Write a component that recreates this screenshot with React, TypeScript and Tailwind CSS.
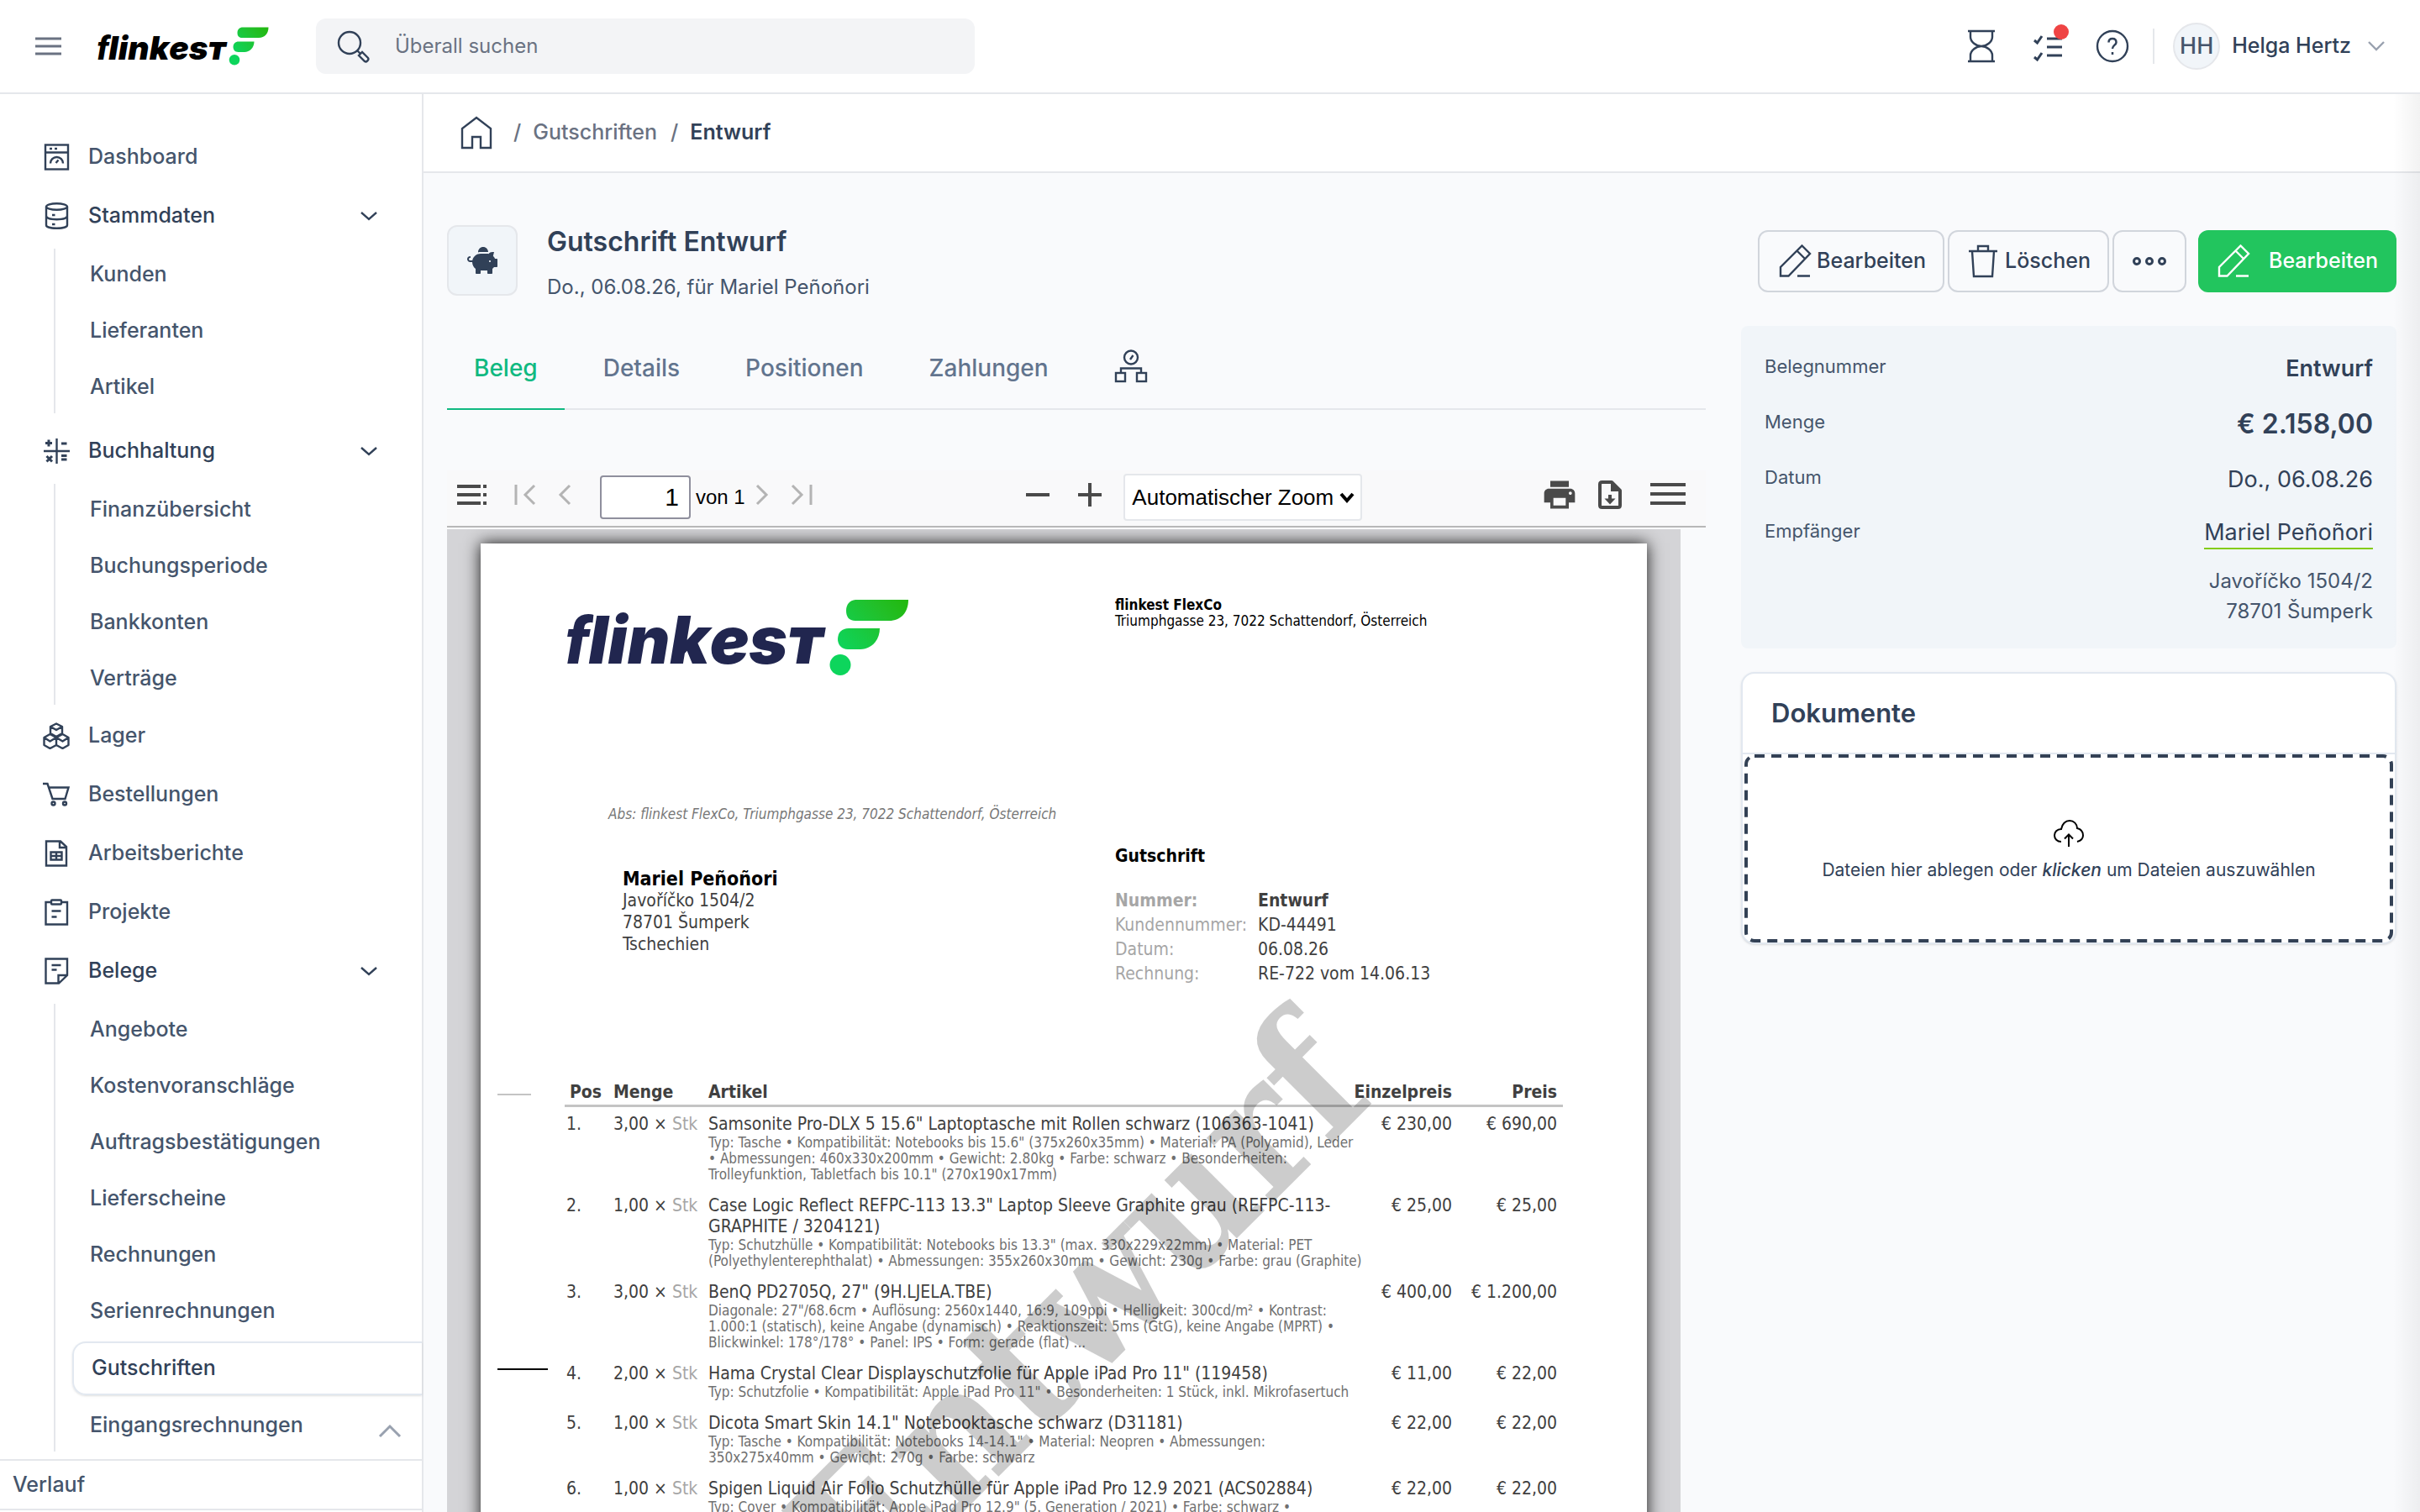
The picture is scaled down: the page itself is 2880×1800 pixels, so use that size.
import { useState } from "react";
import type { ReactNode } from "react";
import { FaPiggyBank } from "react-icons/fa";
import { MdPrint } from "react-icons/md";

interface NavItem {
  label: string;
  icon: ReactNode;
  children?: string[];
}

interface Position {
  amount: string;
  title: string;
  details: string;
  unitPrice: string;
  price: string;
}

function Icon({ children, className = "size-8", box = 32, width = 2.4 }: { children: ReactNode; className?: string; box?: number; width?: number }) {
  return (
    <svg viewBox={`0 0 ${box} ${box}`} className={`shrink-0 ${className}`} fill="none" stroke="currentColor" strokeWidth={width} aria-hidden="true">
      {children}
    </svg>
  );
}

const dashboardIcon = (
  <Icon>
    <rect x="3" y="1.500" width="27" height="29" />
    <path d="M3 10.500H30M8 6H11M14 6H17M9 23.500a7.500 7.500 0 0 1 15 0M15.500 23l3-3.500" />
  </Icon>
);

const databaseIcon = (
  <Icon>
    <ellipse cx="16.500" cy="5" rx="12.500" ry="3.800" />
    <path d="M4 5V27c0 2.200 5 3.800 12.500 3.800S29 29.200 29 27V5M4 16c0 2.500 5 4.200 12.500 4.200S29 18.500 29 16M11 15h3.500M11 26h3.500" />
  </Icon>
);

const calculatorIcon = (
  <Icon>
    <path d="M16.500 1V31M1 16H32" />
    <path d="M3 6.500h8M7 2.500v8M22 7h6.500M22 21.500h6.500M22 26h6.500M4.500 22l6.500 6.500M11 22 4.500 28.500" strokeWidth="3" />
  </Icon>
);

const stockIcon = (
  <Icon>
    <path d="M16 1.500 23 5v8l-7 4-7-4V5ZM9 5l7 4 7-4M16 17v10l-7.500 4L1.500 27v-9l7-4L16 18l7.500-4L30.500 18v9l-7 4L16 27M1.500 18l7 4.500L16 18l7.500 4.500L30.500 18" strokeLinejoin="round" />
  </Icon>
);

const cartIcon = (
  <Icon>
    <path d="M0 3H5.500L11.500 21H26.500L30.500 7.500H7" />
    <circle cx="12.500" cy="26.500" r="2" />
    <circle cx="26" cy="26.500" r="2" />
  </Icon>
);

const reportIcon = (
  <Icon>
    <path d="M4 1.500H21L28 8V30.500H4ZM20 1.500V9H28M9.500 14.500h13v9h-13ZM9.500 19h13M16 14.500v9" />
  </Icon>
);

const projectIcon = (
  <Icon>
    <path d="M10 4H3.500V30.500H29V4H22" />
    <rect x="10" y="1.500" width="12" height="5" rx="1" />
    <path d="M10.500 14.500h11M10.500 21.500h6" />
  </Icon>
);

const noteIcon = (
  <Icon>
    <path d="M3.500 1.500H29V21L19 30.500H3.500ZM18.500 30V21H29M10.500 9h11M10.500 14.500h6" />
  </Icon>
);

const navItems: NavItem[] = [
  { label: "Dashboard", icon: dashboardIcon },
  { label: "Stammdaten", icon: databaseIcon, children: ["Kunden", "Lieferanten", "Artikel"] },
  { label: "Buchhaltung", icon: calculatorIcon, children: ["Finanzübersicht", "Buchungsperiode", "Bankkonten", "Verträge"] },
  { label: "Lager", icon: stockIcon },
  { label: "Bestellungen", icon: cartIcon },
  { label: "Arbeitsberichte", icon: reportIcon },
  { label: "Projekte", icon: projectIcon },
  {
    label: "Belege",
    icon: noteIcon,
    children: [
      "Angebote",
      "Kostenvoranschläge",
      "Auftragsbestätigungen",
      "Lieferscheine",
      "Rechnungen",
      "Serienrechnungen",
      "Gutschriften",
      "Eingangsrechnungen",
    ],
  },
];

const positions: Position[] = [
  {
    amount: "3,00",
    title: `Samsonite Pro-DLX 5 15.6" Laptoptasche mit Rollen schwarz (106363-1041)`,
    details: `Typ: Tasche • Kompatibilität: Notebooks bis 15.6" (375x260x35mm) • Material: PA (Polyamid), Leder\n• Abmessungen: 460x330x200mm • Gewicht: 2.80kg • Farbe: schwarz • Besonderheiten:\nTrolleyfunktion, Tabletfach bis 10.1" (270x190x17mm)`,
    unitPrice: "€ 230,00",
    price: "€ 690,00",
  },
  {
    amount: "1,00",
    title: `Case Logic Reflect REFPC-113 13.3" Laptop Sleeve Graphite grau (REFPC-113-\nGRAPHITE / 3204121)`,
    details: `Typ: Schutzhülle • Kompatibilität: Notebooks bis 13.3" (max. 330x229x22mm) • Material: PET\n(Polyethylenterephthalat) • Abmessungen: 355x260x30mm • Gewicht: 230g • Farbe: grau (Graphite)`,
    unitPrice: "€ 25,00",
    price: "€ 25,00",
  },
  {
    amount: "3,00",
    title: `BenQ PD2705Q, 27" (9H.LJELA.TBE)`,
    details: `Diagonale: 27"/68.6cm • Auflösung: 2560x1440, 16:9, 109ppi • Helligkeit: 300cd/m² • Kontrast:\n1.000:1 (statisch), keine Angabe (dynamisch) • Reaktionszeit: 5ms (GtG), keine Angabe (MPRT) •\nBlickwinkel: 178°/178° • Panel: IPS • Form: gerade (flat) ...`,
    unitPrice: "€ 400,00",
    price: "€ 1.200,00",
  },
  {
    amount: "2,00",
    title: `Hama Crystal Clear Displayschutzfolie für Apple iPad Pro 11" (119458)`,
    details: `Typ: Schutzfolie • Kompatibilität: Apple iPad Pro 11" • Besonderheiten: 1 Stück, inkl. Mikrofasertuch`,
    unitPrice: "€ 11,00",
    price: "€ 22,00",
  },
  {
    amount: "1,00",
    title: `Dicota Smart Skin 14.1" Notebooktasche schwarz (D31181)`,
    details: `Typ: Tasche • Kompatibilität: Notebooks 14-14.1" • Material: Neopren • Abmessungen:\n350x275x40mm • Gewicht: 270g • Farbe: schwarz`,
    unitPrice: "€ 22,00",
    price: "€ 22,00",
  },
  {
    amount: "1,00",
    title: `Spigen Liquid Air Folio Schutzhülle für Apple iPad Pro 12.9 2021 (ACS02884)`,
    details: `Typ: Cover • Kompatibilität: Apple iPad Pro 12.9" (5. Generation / 2021) • Farbe: schwarz •`,
    unitPrice: "€ 22,00",
    price: "€ 22,00",
  },
];

function Logo({ className, id }: { className: string; id: string }) {
  return (
    <svg viewBox="0 0 408 92" className={`overflow-visible ${className}`} role="img" aria-label="flinkest">
      <defs>
        <linearGradient id={id} gradientUnits="userSpaceOnUse" x1="400" y1="0" x2="325" y2="60">
          <stop offset="0" stopColor="#22b910" />
          <stop offset="0.3" stopColor="#22bf28" />
          <stop offset="1" stopColor="#0dd55c" />
        </linearGradient>
      </defs>
      <text x="-1" y="77" fill="currentColor" fontFamily="Inter, sans-serif" fontSize="78" fontWeight="900" fontStyle="italic">
        <tspan fontFamily="Roboto, sans-serif">f</tspan>
        lin
        <tspan style={{ fontVariantCaps: "small-caps" }}>k</tspan>
        es
        <tspan style={{ fontVariantCaps: "small-caps" }}>t</tspan>
      </text>
      <g fill={`url(#${id})`}>
        <path d="M346 1H407C407 16 398 26 384 26H344C336 26 333 21 333 14C333 6 338 1 346 1Z" />
        <path d="M336 35H373C373 50 362 60 350 60H335C327 60 323 54 323 48C323 40 328 35 336 35Z" />
        <circle cx="326" cy="78.500" r="12.500" />
      </g>
    </svg>
  );
}

function PencilIcon() {
  return (
    <Icon className="size-10" box={40}>
      <path d="M3 37.500V27L28.500 1.500 38 11 12.500 37.500ZM22.500 7.500l9.500 9.500M23 37.500H38" />
    </Icon>
  );
}

function ToolButton({ label, className = "text-[#4a4a4a]", children }: { label: string; className?: string; children: ReactNode }) {
  return (
    <button type="button" aria-label={label} className={`mb-1.5 ${className}`}>
      {children}
    </button>
  );
}

function TopBar() {
  return (
    <header className="flex h-28 shrink-0 items-center border-b-2 border-gray-200 bg-white pr-10 pl-10 shadow-sm">
      <button type="button" aria-label="Menü" className="text-gray-500">
        <Icon className="size-9" box={36} width={3}>
          <path d="M2 9H33M2 18H33M2 27H33" />
        </Icon>
      </button>
      <a href="#" className="ml-10 text-black">
        <Logo className="h-[46px] w-[204px]" id="logo-header" />
      </a>
      <label className="ml-14 flex h-[66px] w-[784px] items-center gap-[30px] rounded-xl bg-gray-100 pl-6 text-slate-700">
        <Icon className="size-10" box={40}>
          <circle cx="16" cy="16" r="13" />
          <path d="M25.500 25.500l3 3M27 31l4-4 7 7c1.500 2-2 5.500-4 4Z" />
        </Icon>
        <input type="search" aria-label="Überall suchen" placeholder="Überall suchen" className="w-full bg-transparent text-2xl outline-none placeholder:text-gray-500" />
      </label>
      <div className="ml-auto flex items-center text-slate-700">
        <button type="button" aria-label="Zeiterfassung">
          <Icon className="size-10" box={40}>
            <path d="M4 2H36M4 38H36M7 2V9C7 15 14 20 20 20S33 15 33 9V2M7 38V31C7 25 14 20 20 20S33 25 33 31V38" />
          </Icon>
        </button>
        <button type="button" aria-label="Aufgaben" className="relative ml-10">
          <Icon className="size-10" box={40} width={3}>
            <path d="M18 11H36M18 21H36M18 31H36" />
            <path d="M3 13l3.500 3L12 8M3 33l3.500 3L12 28" />
          </Icon>
          <span className="absolute -top-1.5 -right-1 size-[18px] rounded-full bg-[#ef4444]" />
        </button>
        <button type="button" aria-label="Hilfe" className="ml-9">
          <Icon className="size-10" box={40}>
            <circle cx="20" cy="20" r="18" />
            <path d="M15.500 15.500c0-3 2-4.500 4.500-4.500s4.500 1.500 4.500 4.500-4.500 3.500-4.500 7.500M20 27v3" strokeWidth="2.500" />
          </Icon>
        </button>
        <span className="ml-7 h-[42px] w-0.5 bg-gray-200" />
        <button type="button" className="ml-[22px] flex items-center">
          <span className="flex size-14 items-center justify-center rounded-full border-2 border-gray-200 bg-slate-100 text-[27px] font-medium text-slate-600">HH</span>
          <span className="ml-[14px] text-[25px] font-medium text-slate-700">Helga Hertz</span>
          <Icon className="ml-[18px] size-6 text-gray-400" box={24}>
            <path d="M3 7l9 9 9-9" />
          </Icon>
        </button>
      </div>
    </header>
  );
}

function Sidebar() {
  return (
    <aside className="relative flex w-[504px] shrink-0 flex-col border-r-2 border-gray-200 bg-white text-[25px] font-medium text-slate-600">
      <nav className="flex flex-1 flex-col pt-10">
        {navItems.map((item) => (
          <div key={item.label} className={item.label === "Buchhaltung" ? "pt-2" : ""}>
            <a href="#" className={`flex h-[70px] items-center gap-[22px] pr-[51px] pl-[51px] ${item.children ? "text-slate-700" : ""}`}>
              <span className="text-slate-700">{item.icon}</span>
              {item.label}
              {item.children && (
                <Icon className="ml-auto size-6" box={24}>
                  <path d="M3 8l9 8 9-8" />
                </Icon>
              )}
            </a>
            {item.children && (
              <ul className="mt-1 mb-0.5 ml-16 flex flex-col gap-[5px] border-l-2 border-gray-200">
                {item.children.map((child) =>
                  child === "Gutschriften" ? (
                    <li key={child}>
                      <a href="#" className="ml-5 flex h-16 items-center rounded-l-2xl border-2 border-r-0 border-slate-200 pl-[21px] text-slate-700 shadow-sm">
                        {child}
                      </a>
                    </li>
                  ) : (
                    <li key={child}>
                      <a href="#" className="flex h-[62px] items-center pl-[41px]">
                        {child}
                      </a>
                    </li>
                  )
                )}
              </ul>
            )}
          </div>
        ))}
      </nav>
      <button type="button" aria-label="Nach oben" className="absolute right-[22px] bottom-20 text-gray-400">
        <Icon className="size-8" box={32} width={3}>
          <path d="M4 22l12-12 12 12" />
        </Icon>
      </button>
      <a href="#" className="mb-0.5 flex h-[61px] shrink-0 items-center border-y-2 border-gray-200 bg-white pl-[15px]">
        Verlauf
      </a>
    </aside>
  );
}

function Breadcrumb() {
  return (
    <nav className="flex h-[94px] shrink-0 items-center border-b-2 border-gray-200 bg-white pl-[43px] text-[25px] font-medium">
      <a href="#" aria-label="Startseite" className="text-slate-700">
        <Icon className="size-10" box={40}>
          <path d="M3 38V15L20 2 37 15V38H25V25H15V38Z" />
        </Icon>
      </a>
      <span className="ml-6 text-gray-500">/</span>
      <a href="#" className="ml-[14px] text-gray-500">Gutschriften</a>
      <span className="ml-4 text-gray-500">/</span>
      <span className="ml-[14px] font-semibold text-slate-700">Entwurf</span>
    </nav>
  );
}

function Tabs() {
  const [active, setActive] = useState("Beleg");

  return (
    <div className="mt-[34px] flex items-center gap-[14px] border-b-2 border-gray-200">
      {["Beleg", "Details", "Positionen", "Zahlungen"].map((tab) => (
        <button
          key={tab}
          type="button"
          onClick={() => setActive(tab)}
          className={`-mb-0.5 h-[98px] border-b-2 px-8 text-[28px] font-medium ${active === tab ? "border-[#10b981] text-[#10b981]" : "border-transparent text-slate-500"}`}
        >
          {tab}
        </button>
      ))}
      <button type="button" aria-label="Verlauf" className="px-8 pb-1 text-slate-700">
        <Icon className="size-10" box={40}>
          <circle cx="20" cy="9.500" r="8" />
          <path d="M19 12l3.500-5M8 28V22.500H32V28" />
          <rect x="2" y="28" width="11" height="10" />
          <rect x="27" y="28" width="11" height="10" />
        </Icon>
      </button>
    </div>
  );
}

function PdfToolbar() {
  return (
    <div className="mt-[72px] flex h-[68px] items-center border-b-2 border-[#b8b8b8] bg-[#f9f9fa] pr-6 pb-0.5 pl-3 font-['Liberation_Sans',Arial,sans-serif] text-black">
      <ToolButton label="Seitenleiste">
        <Icon className="size-9" box={36} width={4}>
          <path d="M0 8H28M0 18H28M0 28H28M31 8H35M31 18H35M31 28H35" />
        </Icon>
      </ToolButton>
      <ToolButton label="Erste Seite" className="ml-8 text-[#b4b4b4]">
        <Icon className="size-7" box={28} width={3}>
          <path d="M2 2V26M24 3 13 14l11 11" />
        </Icon>
      </ToolButton>
      <ToolButton label="Zurück" className="ml-5 text-[#b4b4b4]">
        <Icon className="size-7" box={28} width={3}>
          <path d="M18 3 7 14l11 11" />
        </Icon>
      </ToolButton>
      <input aria-label="Seite" defaultValue="1" className="ml-[26px] h-[52px] w-[108px] rounded border-2 border-[#8f8f9d] bg-white pr-3 text-right text-[30px]" />
      <span className="ml-1.5 text-2xl">von 1</span>
      <ToolButton label="Weiter" className="ml-1.5 text-[#b4b4b4]">
        <Icon className="size-7" box={28} width={3}>
          <path d="M8 3 19 14 8 25" />
        </Icon>
      </ToolButton>
      <ToolButton label="Letzte Seite" className="ml-[18px] text-[#b4b4b4]">
        <Icon className="size-7" box={28} width={3}>
          <path d="M4 3 15 14 4 25M26 2V26" />
        </Icon>
      </ToolButton>
      <div className="flex flex-1 items-center justify-center pl-10">
        <ToolButton label="Verkleinern">
          <Icon className="size-8" box={32} width={4}>
            <path d="M2 16H30" />
          </Icon>
        </ToolButton>
        <ToolButton label="Vergrößern" className="ml-[30px] text-[#4a4a4a]">
          <Icon className="size-8" box={32} width={4}>
            <path d="M2 16H30M16 2V30" />
          </Icon>
        </ToolButton>
        <span className="relative ml-6">
          <select aria-label="Zoom" className="h-14 w-[284px] appearance-none rounded border-2 border-gray-200 bg-white pl-2 text-[26px]">
            <option>Automatischer Zoom</option>
          </select>
          <Icon className="pointer-events-none absolute top-[18px] right-2 size-5" box={20} width={4}>
            <path d="M3 6l7 8 7-8" />
          </Icon>
        </span>
      </div>
      <ToolButton label="Drucken">
        <MdPrint className="size-11" />
      </ToolButton>
      <ToolButton label="Speichern" className="ml-5 text-[#4a4a4a]">
        <Icon className="size-9" box={36} width={4}>
          <path d="M20 3H8.500Q6 3 6 5.500V30.500Q6 33 8.500 33H27.500Q30 33 30 30.500V13Z" strokeLinejoin="round" />
          <path d="M19 3V14H30Z" fill="currentColor" stroke="none" />
          <path d="M18 18V24" />
          <path d="M11.500 22.500H24.500L18 29.500Z" fill="currentColor" stroke="none" />
        </Icon>
      </ToolButton>
      <ToolButton label="Werkzeuge" className="ml-[30px] text-[#4a4a4a]">
        <Icon className="size-[42px]" box={42} width={4}>
          <path d="M0 9H42M0 20H42M0 31H42" />
        </Icon>
      </ToolButton>
    </div>
  );
}

function DocumentPage() {
  return (
    <div className="relative h-[1963px] bg-white px-[100px] pt-16 text-[#404040] shadow-[0_0_18px_rgba(0,0,0,0.9)]">
      <span className="absolute top-[655px] left-5 h-0.5 w-10 bg-[#c4c4c4]" />
      <span className="absolute top-[982px] left-5 h-0.5 w-[60px] bg-black" />
      <div className="grid h-[284px] grid-cols-[655px_1fr]">
        <Logo className="mt-0.5 ml-0.5 h-[92px] w-[408px] text-[#21264f]" id="logo-document" />
        <div className="text-[17px]/[19px] text-black">
          <p className="font-bold">flinkest FlexCo</p>
          <p>Triumphgasse 23, 7022 Schattendorf, Österreich</p>
        </div>
      </div>
      <div className="grid h-[293px] grid-cols-[655px_1fr]">
        <div className="pl-[52px]">
          <p className="-mt-[38px] text-[17px]/6 text-[#777777] italic">Abs: flinkest FlexCo, Triumphgasse 23, 7022 Schattendorf, Österreich</p>
          <address className="mt-[52px] pl-[17px] text-[21px]/[26px] not-italic">
            <p className="text-[23px] font-bold text-black">Mariel Peñoñori</p>
            <p>Javoříčko 1504/2</p>
            <p>78701 Šumperk</p>
            <p>Tschechien</p>
          </address>
        </div>
        <div className="text-[21px]/[29px]">
          <h2 className="mt-2.5 font-bold text-black">Gutschrift</h2>
          <dl className="mt-6 grid grid-cols-[170px_1fr]">
            <dt className="font-bold text-[#a6a6a6]">Nummer:</dt>
            <dd className="font-bold">Entwurf</dd>
            <dt className="text-[#a6a6a6]">Kundennummer:</dt>
            <dd>KD-44491</dd>
            <dt className="text-[#a6a6a6]">Datum:</dt>
            <dd>06.08.26</dd>
            <dt className="text-[#a6a6a6]">Rechnung:</dt>
            <dd>RE-722 vom 14.06.13</dd>
          </dl>
        </div>
      </div>
      <table className="w-full table-fixed text-[21px]/[25px]">
        <thead>
          <tr className="h-7 border-b-[3px] border-[#c4c4c4] text-left align-top">
            <th className="w-[58px] pl-1.5">Pos</th>
            <th className="w-[113px]">Menge</th>
            <th>Artikel</th>
            <th className="w-[140px] text-right">Einzelpreis</th>
            <th className="w-[132px] pr-[7px] text-right">Preis</th>
          </tr>
        </thead>
        <tbody className="before:block before:h-2">
          {positions.map((position, index) => (
            <tr key={position.title} className="align-top">
              <td className="pl-0.5">{index + 1}.</td>
              <td>
                {position.amount} × <span className="text-[#a6a6a6]">Stk</span>
              </td>
              <td className="pb-[15px] whitespace-pre">
                {position.title}
                <p className="text-[17px]/[19px] text-[#707070]">{position.details}</p>
              </td>
              <td className="text-right">{position.unitPrice}</td>
              <td className="pr-[7px] text-right">{position.price}</td>
            </tr>
          ))}
        </tbody>
      </table>
      <p className="pointer-events-none absolute top-[471px] right-[298px] origin-bottom-right -rotate-45 font-['DejaVu_Serif_Condensed','DejaVu_Serif',serif] text-[212px] leading-none font-bold text-black/20">Entwurf</p>
    </div>
  );
}

function Summary() {
  return (
    <dl className="mt-10 grid grid-cols-[auto_1fr] rounded-lg bg-slate-100 px-7 pt-4 pb-[26px] text-slate-700">
      <dt className="flex h-[66px] items-center pb-0.5 text-[22px] text-slate-600">Belegnummer</dt>
      <dd className="flex items-center justify-end pt-1 text-[27px] font-semibold">Entwurf</dd>
      <dt className="flex h-[66px] items-center pb-0.5 text-[22px] text-slate-600">Menge</dt>
      <dd className="flex items-center justify-end pt-1 text-[32px] font-semibold">€ 2.158,00</dd>
      <dt className="flex h-[66px] items-center pb-0.5 text-[22px] text-slate-600">Datum</dt>
      <dd className="flex items-center justify-end pt-1 text-[27px]">Do., 06.08.26</dd>
      <dt className="flex h-[62px] items-center pb-0.5 text-[22px] text-slate-600">Empfänger</dt>
      <dd className="flex items-center justify-end pt-1 text-[27px]">
        <a href="#" className="border-b-2 border-[#84cc16] leading-9">Mariel Peñoñori</a>
      </dd>
      <dd className="col-span-2 mt-2.5 text-right text-2xl/9 text-slate-600">
        Javoříčko 1504/2
        <br />
        78701 Šumperk
      </dd>
    </dl>
  );
}

function Documents() {
  return (
    <section className="mt-7 rounded-2xl border-2 border-slate-200 bg-white shadow-sm">
      <h2 className="flex h-24 items-center border-b-2 border-slate-200 pl-[34px] text-[31px] font-semibold text-slate-700">Dokumente</h2>
      <button type="button" className="relative mx-0.5 flex h-[224px] w-[calc(100%-4px)] flex-col items-center justify-center gap-2.5 pt-1.5 text-[21px] text-slate-700">
        <svg className="absolute inset-0 size-full" fill="none" stroke="#334155" strokeWidth="4" strokeDasharray="12 8" aria-hidden="true">
          <rect x="2" y="2" rx="10" className="h-[calc(100%-4px)] w-[calc(100%-4px)]" />
        </svg>
        <Icon className="size-9 text-black" box={36} width={2}>
          <path d="M9 28C4 28 1 24.500 1 20.500S4 13 9 13C10 7 14 3 19 3S28 7 28 12C32 13 35 16 35 20.500S32 27 28 28M18 34V20M13 24.500l5-5 5 5" />
        </Icon>
        <span>
          Dateien hier ablegen oder <em className="font-medium">klicken</em> um Dateien auszuwählen
        </span>
      </button>
    </section>
  );
}

const outlineButton = "flex h-[74px] items-center rounded-xl border-2 border-gray-300 text-[25px] font-medium text-slate-700";

export default function App() {
  return (
    <div className="flex h-screen flex-col overflow-hidden bg-[#f9fafc] font-[Inter,sans-serif]">
      <TopBar />
      <div className="relative flex min-h-0 flex-1">
        <Sidebar />
        <div className="flex min-w-0 flex-1 flex-col">
          <Breadcrumb />
          <main className="flex min-h-0 flex-1 gap-[42px] overflow-hidden px-7">
            <div className="min-w-0 flex-1 pt-[58px]">
              <div className="flex items-center gap-[35px]">
                <span className="flex size-[84px] items-center justify-center rounded-xl border-2 border-gray-200 bg-slate-100 text-slate-700">
                  <FaPiggyBank className="size-9" />
                </span>
                <div>
                  <h1 className="text-[32px]/[48px] font-semibold text-slate-700">Gutschrift Entwurf</h1>
                  <p className="mt-4 text-2xl/7 text-slate-600">Do., 06.08.26, für Mariel Peñoñori</p>
                </div>
              </div>
              <Tabs />
              <PdfToolbar />
              <div className="mt-0.5 mr-[30px] overflow-hidden bg-[#d4d4d7] px-10 pt-[17px] pb-5 font-['DejaVu_Sans_Condensed','DejaVu_Sans',sans-serif]">
                <DocumentPage />
              </div>
            </div>
            <div className="w-[780px] shrink-0 pt-[68px]">
              <div className="flex justify-end">
                <button type="button" className={`${outlineButton} gap-1.5 pr-5 pl-[22px]`}>
                  <PencilIcon />
                  Bearbeiten
                </button>
                <button type="button" className={`${outlineButton} ml-1 gap-1.5 pr-5 pl-5`}>
                  <Icon className="size-10" box={40}>
                    <path d="M3 8H37M14 8V2H26V8M7 8L9 38H31L33 8" />
                  </Icon>
                  Löschen
                </button>
                <button type="button" aria-label="Mehr" className={`${outlineButton} ml-1 px-[22px]`}>
                  <Icon className="size-10" box={40} width={3}>
                    <circle cx="5" cy="20" r="3.500" />
                    <circle cx="20" cy="20" r="3.500" />
                    <circle cx="35" cy="20" r="3.500" />
                  </Icon>
                </button>
                <button type="button" className="ml-[14px] flex h-[74px] items-center gap-[22px] rounded-xl bg-[#22c55e] pr-[22px] pl-[22px] text-[25px] font-medium text-white">
                  <PencilIcon />
                  Bearbeiten
                </button>
              </div>
              <Summary />
              <Documents />
            </div>
          </main>
        </div>
        <div className="pointer-events-none absolute inset-y-0 right-0 w-8 bg-linear-to-r from-transparent to-black/5" />
      </div>
    </div>
  );
}
